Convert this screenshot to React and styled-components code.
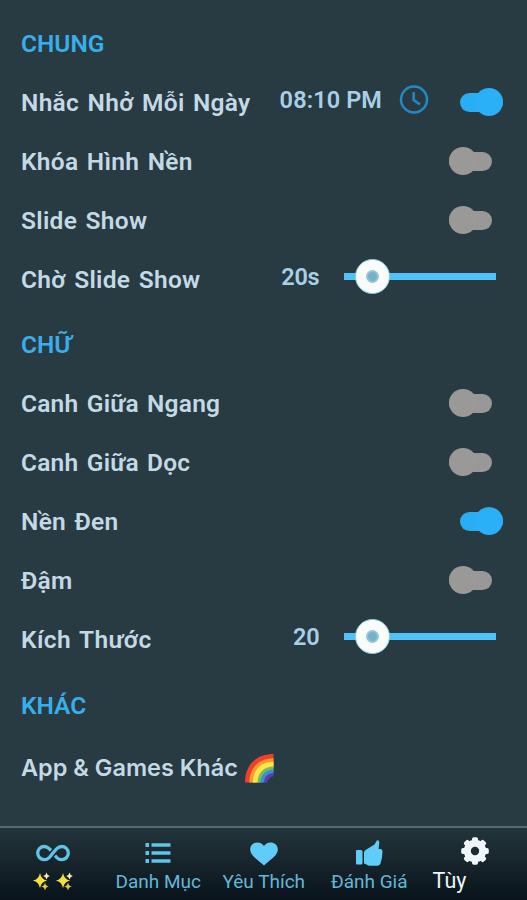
import React from "react";
import styled, { createGlobalStyle } from "styled-components";

const GlobalStyle = createGlobalStyle`
  * { box-sizing: border-box; }
  body { margin: 0; background: #283a42; font-family: Roboto, "Liberation Sans", sans-serif; }
`;

const Screen = styled.main`
  display: flex;
  flex-direction: column;
  width: 527px;
  height: 900px;
  overflow: hidden;
  background: #283a42;
`;

const Settings = styled.div`
  flex: 1;
  padding-top: 14px;
`;

const SectionTitle = styled.h2`
  display: flex;
  align-items: center;
  height: ${(p) => p.$height || 59}px;
  margin: 0;
  padding: ${(p) => p.$top || 0}px 0 0 21px;
  color: #38aeea;
  font-size: 24.5px;
  line-height: 30px;
  font-weight: 600;
`;

const Row = styled.div`
  display: grid;
  grid-template-columns: 255px 1fr;
  align-items: center;
  height: 59px;
  padding-left: 21px;
`;

const Label = styled.span`
  color: #c3d9e6;
  font-size: 24.5px;
  line-height: 30px;
  font-weight: 600;
  white-space: nowrap;
  letter-spacing: ${(p) => p.$spacing ?? 0.3}px;
  word-spacing: 2px;
`;

const Controls = styled.div`
  display: flex;
  align-items: center;
  justify-content: flex-end;
  padding-right: ${(p) => p.$right}px;
`;

const Value = styled.span`
  color: #a9cfe8;
  font-size: 23.5px;
  line-height: 30px;
  font-weight: 600;
  white-space: nowrap;
  letter-spacing: ${(p) => p.$spacing ?? 0.1}px;
  margin: 0 ${(p) => p.$gap}px 5px 0;
`;

const Track = styled.span`
  display: flex;
  align-items: center;
  justify-content: ${(p) => (p.$on ? "flex-end" : "flex-start")};
  flex: none;
  width: 43px;
  height: 19px;
  margin-bottom: 1px;
  border-radius: 10px;
  background: ${(p) => (p.$on ? "#2aaef3" : "#999797")};
`;

const Thumb = styled.span`
  flex: none;
  width: 28px;
  height: 28px;
  border-radius: 50%;
  background: ${(p) => (p.$on ? "#29b0f7" : "#9b9898")};
`;

const SliderLine = styled.span`
  display: flex;
  align-items: center;
  flex: none;
  width: 152px;
  height: 7px;
  margin-bottom: 6px;
  padding-left: 11px;
  background: #4fc3f7;
`;

const SliderKnob = styled.span`
  display: flex;
  align-items: center;
  justify-content: center;
  flex: none;
  width: 35px;
  height: 35px;
  border: 1px solid #8cc9d8;
  border-radius: 50%;
  background: #fafcfc;
`;

const SliderDot = styled.span`
  width: 13px;
  height: 13px;
  border-radius: 50%;
  border: 2px solid #93c6d7;
  background: #75b1c8;
`;

const Clock = styled.svg`
  flex: none;
  width: 30px;
  height: 30px;
  margin: 0 31px 6px 0;
`;

const MoreRow = styled.div`
  display: flex;
  align-items: center;
  height: 64px;
  padding-left: 21px;
`;

const MoreLabel = styled.span`
  width: 224px;
  color: #c3d9e6;
  font-family: Inter, sans-serif;
  font-size: 23.5px;
  line-height: 30px;
  font-weight: 600;
  white-space: nowrap;
`;

const Rainbow = styled.svg`
  width: 29px;
  height: 29px;
`;

const NavBar = styled.nav`
  display: flex;
  height: 74px;
  border-top: 2px solid #566970;
  background: linear-gradient(#23343b 0%, #17242b 50%, #08131b 100%);
`;

const NavItem = styled.a`
  display: flex;
  flex-direction: column;
  align-items: center;
  width: ${(p) => (p.$last ? 105 : 105.5)}px;
  padding-top: ${(p) => (p.$last ? 9 : 11)}px;
  color: #5fc4ea;
`;

const NavIcon = styled.svg`
  width: 34px;
  height: 28px;
`;

const NavText = styled.span`
  font-size: ${(p) => (p.$last ? 21.5 : 19)}px;
  line-height: 26px;
  white-space: nowrap;
  color: ${(p) => (p.$last ? "#eef6fb" : "#63b7d8")};
  margin: ${(p) => (p.$last ? "3px 50px 0 0" : "2px 0 0")};
`;

const Sparkles = styled.svg`
  width: 42px;
  height: 20px;
  margin: 4px 0 0 1px;
`;

const Switch = ({ on }) => (
  <Controls $right={on ? 24 : 35}>
    <Track $on={on}><Thumb $on={on} /></Track>
  </Controls>
);

const Slider = ({ value, spacing }) => (
  <Controls $right={31}>
    <Value $gap={24.5} $spacing={spacing}>{value}</Value>
    <SliderLine><SliderKnob><SliderDot /></SliderKnob></SliderLine>
  </Controls>
);

const ToggleRow = ({ label, on, spacing }) => (
  <Row><Label $spacing={spacing}>{label}</Label><Switch on={on} /></Row>
);

const star = "M0 -8Q1.300 -1.300 7.500 0Q1.300 1.300 0 8Q-1.300 1.300 -7.500 0Q-1.300 -1.300 0 -8Z";

const SparkleGroup = ({ x }) => (
  <g transform={`translate(${x} 0)`}>
    <path d={star} transform="translate(7 9.500) scale(.95)" fill="#f3e13a" />
    <path d={star} transform="translate(13.500 5) scale(.45)" fill="#f3edba" />
    <path d={star} transform="translate(12 15.500) scale(.5)" fill="#e0c450" />
  </g>
);

const gearTeeth = [0, 45, 90, 135, 180, 225, 270, 315];

export default function App() {
  return (
    <Screen>
      <GlobalStyle />
      <Settings>
        <SectionTitle>CHUNG</SectionTitle>
        <Row>
          <Label>Nhắc Nhở Mỗi Ngày</Label>
          <Controls $right={24}>
            <Value $gap={17}>08:10 PM</Value>
            <Clock viewBox="0 0 30 30" fill="none" stroke="#2488c5" strokeWidth="2.5">
              <circle cx="15" cy="14.500" r="13" />
              <path d="M14.700 7V15L21 19.500" />
            </Clock>
            <Track $on><Thumb $on /></Track>
          </Controls>
        </Row>
        <ToggleRow label="Khóa Hình Nền" />
        <ToggleRow label="Slide Show" />
        <Row><Label>Chờ Slide Show</Label><Slider value="20s" spacing={-0.2} /></Row>

        <SectionTitle $height={65} $top={6}>CHỮ</SectionTitle>
        <ToggleRow label="Canh Giữa Ngang" spacing={0.22} />
        <ToggleRow label="Canh Giữa Dọc" spacing={0.22} />
        <ToggleRow label="Nền Đen" on />
        <ToggleRow label="Đậm" />
        <Row><Label $spacing={0.4}>Kích Thước</Label><Slider value="20" spacing={-0.2} /></Row>

        <SectionTitle $height={67} $top={6}>KHÁC</SectionTitle>
        <MoreRow>
          <MoreLabel>App &amp; Games Khác</MoreLabel>
          <Rainbow viewBox="0 0 29 29">
            <path d="M0 28.500C0 11 11 0 28.500 0V11L11 28.500Z" fill="#ee412c" />
            <path d="M4.300 28.500C4.300 14 14 4.300 28.500 4.300V12L12 28.500Z" fill="#fb982b" />
            <path d="M7.800 28.500C7.800 16 16 7.800 28.500 7.800V14L14 28.500Z" fill="#fbe54e" />
            <path d="M12.500 28.500C12.500 19 19 12.500 28.500 12.500V17L17 28.500Z" fill="#75bd4d" />
            <path d="M15.500 28.500C15.500 21 21 15.500 28.500 15.500V20L20 28.500Z" fill="#3290e0" />
            <path d="M19 28.500C19 23 23 19 28.500 19V22.500C25 22.500 22.500 25 22.500 28.500Z" fill="#6837ac" />
          </Rainbow>
        </MoreRow>
      </Settings>

      <NavBar>
        <NavItem>
          <NavIcon viewBox="0 0 34 28" fill="none" stroke="currentColor" strokeWidth="3.300">
            <path d="M19 11.500L20.800 9.600C22.300 8.200 23.800 7.500 25.700 7.500A6.600 6.600 0 0 1 25.700 20.700C23.800 20.700 22.200 20 20.800 18.600C18 16 16 12.200 13.200 9.600C11.800 8.200 10.200 7.500 8.300 7.500A6.600 6.600 0 0 0 8.300 20.700C10.200 20.700 11.700 20 13.200 18.600L15 16.700" transform="matrix(1 0 0 -1 0 28.200)" />
          </NavIcon>
          <Sparkles viewBox="0 0 42 20"><SparkleGroup x={1} /><SparkleGroup x={24} /></Sparkles>
        </NavItem>
        <NavItem>
          <NavIcon viewBox="0 0 34 28" fill="currentColor">
            <path d="M4.500 4h3.500v4H4.500zM4.500 12h3.500v4H4.500zM4.500 20h3.500v4H4.500zM10.500 4.200h19v3.500h-19zM10.500 12.200h19v3.500h-19zM10.500 20.200h19v3.500h-19z" />
          </NavIcon>
          <NavText>Danh Mục</NavText>
        </NavItem>
        <NavItem>
          <NavIcon viewBox="0 0 34 28" fill="#5fcdf8">
            <path d="M17 26.500C9 19.500 3.200 16 3.200 10.500C3.200 3 13 1 17 7C21 1 30.800 3 30.800 10.500C30.800 16 25 19.500 17 26.500Z" />
          </NavIcon>
          <NavText>Yêu Thích</NavText>
        </NavItem>
        <NavItem>
          <NavIcon viewBox="0 0 34 28" fill="#5fcdf8">
            <path d="M4 12Q4 11 5 11H9Q10.500 11 10.500 12.500V24Q10.500 25.500 9 25.500H5Q4 25.500 4 24ZM12 14Q12 12 13.500 11L22.500 5.500L25 1.200Q27.300 .8 27.300 4L26.500 10H28Q30.700 10 30.500 13Q30.400 19 28.500 24.500Q27.700 26.800 25 26.800H18Q16 26.800 14.500 25.600L12 24.500Z" />
          </NavIcon>
          <NavText>Đánh Giá</NavText>
        </NavItem>
        <NavItem $last>
          <NavIcon viewBox="0 0 34 28" fill="#eef6fb">
            <circle cx="17" cy="14" r="7.700" fill="none" stroke="#eef6fb" strokeWidth="7" />
            {gearTeeth.map((angle) => (
              <rect key={angle} x="14" y="0.200" width="6" height="6" rx="1.800" transform={`rotate(${angle} 17 14)`} />
            ))}
          </NavIcon>
          <NavText $last>Tùy</NavText>
        </NavItem>
      </NavBar>
    </Screen>
  );
}
